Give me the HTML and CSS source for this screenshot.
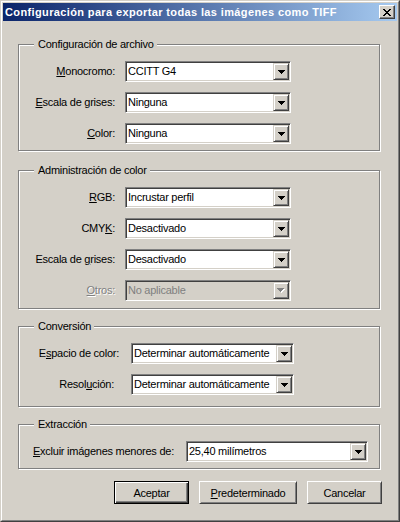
FILE: index.html
```html
<!DOCTYPE html>
<html lang="es">
<head>
<meta charset="utf-8">
<title>Configuración para exportar todas las imágenes como TIFF</title>
<link rel="stylesheet" href="styles.css">
</head>
<body>
<div class="window">
  <div class="frame">
    <div class="titlebar">
      <span class="title">Configuración para exportar todas las imágenes como TIFF</span>
      <span class="close">
        <svg width="8" height="7" viewBox="0 0 8 7" shape-rendering="crispEdges">
          <rect x="0" y="0" width="2" height="1"/><rect x="6" y="0" width="2" height="1"/>
          <rect x="1" y="1" width="2" height="1"/><rect x="5" y="1" width="2" height="1"/>
          <rect x="2" y="2" width="4" height="1"/>
          <rect x="3" y="3" width="2" height="1"/>
          <rect x="2" y="4" width="4" height="1"/>
          <rect x="1" y="5" width="2" height="1"/><rect x="5" y="5" width="2" height="1"/>
          <rect x="0" y="6" width="2" height="1"/><rect x="6" y="6" width="2" height="1"/>
        </svg>
      </span>
    </div>

    <div class="content">
      <div class="group g1">
        <div class="group-title">Configuración de archivo</div>
        <div class="form">
          <span class="lbl"><u>M</u>onocromo:</span>
          <div class="combo"><span class="val">CCITT G4</span><span class="drop"><svg class="arrow" width="7" height="4" viewBox="0 0 7 4" shape-rendering="crispEdges"><path d="M0 0h7v1h-7zM1 1h5v1h-5zM2 2h3v1h-3zM3 3h1v1h-1z"/></svg></span></div>
          <span class="lbl"><u>E</u>scala de grises:</span>
          <div class="combo"><span class="val">Ninguna</span><span class="drop"><svg class="arrow" width="7" height="4" viewBox="0 0 7 4" shape-rendering="crispEdges"><path d="M0 0h7v1h-7zM1 1h5v1h-5zM2 2h3v1h-3zM3 3h1v1h-1z"/></svg></span></div>
          <span class="lbl"><u>C</u>olor:</span>
          <div class="combo"><span class="val">Ninguna</span><span class="drop"><svg class="arrow" width="7" height="4" viewBox="0 0 7 4" shape-rendering="crispEdges"><path d="M0 0h7v1h-7zM1 1h5v1h-5zM2 2h3v1h-3zM3 3h1v1h-1z"/></svg></span></div>
        </div>
      </div>

      <div class="group g2">
        <div class="group-title">Administración de color</div>
        <div class="form">
          <span class="lbl"><u>R</u>GB:</span>
          <div class="combo"><span class="val">Incrustar perfil</span><span class="drop"><svg class="arrow" width="7" height="4" viewBox="0 0 7 4" shape-rendering="crispEdges"><path d="M0 0h7v1h-7zM1 1h5v1h-5zM2 2h3v1h-3zM3 3h1v1h-1z"/></svg></span></div>
          <span class="lbl">CMY<u>K</u>:</span>
          <div class="combo"><span class="val">Desactivado</span><span class="drop"><svg class="arrow" width="7" height="4" viewBox="0 0 7 4" shape-rendering="crispEdges"><path d="M0 0h7v1h-7zM1 1h5v1h-5zM2 2h3v1h-3zM3 3h1v1h-1z"/></svg></span></div>
          <span class="lbl">Escala de <u>g</u>rises:</span>
          <div class="combo"><span class="val">Desactivado</span><span class="drop"><svg class="arrow" width="7" height="4" viewBox="0 0 7 4" shape-rendering="crispEdges"><path d="M0 0h7v1h-7zM1 1h5v1h-5zM2 2h3v1h-3zM3 3h1v1h-1z"/></svg></span></div>
          <span class="lbl disabled"><u>O</u>tros:</span>
          <div class="combo disabled"><span class="val">No aplicable</span><span class="drop"><svg class="arrow" width="8" height="5" viewBox="0 0 8 5" shape-rendering="crispEdges"><path class="hl" d="M1 1h7v1h-7zM2 2h5v1h-5zM3 3h3v1h-3zM4 4h1v1h-1z"/><path class="sh" d="M0 0h7v1h-7zM1 1h5v1h-5zM2 2h3v1h-3zM3 3h1v1h-1z"/></svg></span></div>
        </div>
      </div>

      <div class="group g3">
        <div class="group-title">Conversión</div>
        <div class="form">
          <span class="lbl">E<u>s</u>pacio de color:</span>
          <div class="combo"><span class="val">Determinar automáticamente</span><span class="drop"><svg class="arrow" width="7" height="4" viewBox="0 0 7 4" shape-rendering="crispEdges"><path d="M0 0h7v1h-7zM1 1h5v1h-5zM2 2h3v1h-3zM3 3h1v1h-1z"/></svg></span></div>
          <span class="lbl res">Resol<u>u</u>ción:</span>
          <div class="combo"><span class="val">Determinar automáticamente</span><span class="drop"><svg class="arrow" width="7" height="4" viewBox="0 0 7 4" shape-rendering="crispEdges"><path d="M0 0h7v1h-7zM1 1h5v1h-5zM2 2h3v1h-3zM3 3h1v1h-1z"/></svg></span></div>
        </div>
      </div>

      <div class="group g4">
        <div class="group-title">Extracción</div>
        <div class="form">
          <span class="lbl"><u>E</u>xcluir imágenes menores de:</span>
          <div class="combo"><span class="val">25,40 milímetros</span><span class="drop"><svg class="arrow" width="7" height="4" viewBox="0 0 7 4" shape-rendering="crispEdges"><path d="M0 0h7v1h-7zM1 1h5v1h-5zM2 2h3v1h-3zM3 3h1v1h-1z"/></svg></span></div>
        </div>
      </div>

      <div class="buttons">
        <button class="btn default">Aceptar</button>
        <button class="btn wide"><u>P</u>redeterminado</button>
        <button class="btn">Cancelar</button>
      </div>
    </div>
  </div>
</div>
</body>
</html>
```
FILE: styles.css
```css
* { box-sizing: border-box; }

html, body {
  margin: 0;
  padding: 0;
  background: #d4d0c8;
}

body {
  font-family: "Liberation Sans", Arial, sans-serif;
  font-size: 11px;
  letter-spacing: -0.25px;
  color: #000;
}

u { text-decoration: underline; text-underline-offset: 1px; }

.window {
  width: 400px;
  height: 522px;
  border: 1px solid;
  border-color: #d4d0c8 #404040 #404040 #d4d0c8;
  background: #d4d0c8;
}

.frame {
  height: 100%;
  border: 1px solid;
  border-color: #fff #808080 #808080 #fff;
  padding: 1px;
}

.titlebar {
  height: 18px;
  display: flex;
  align-items: center;
  justify-content: space-between;
  padding: 0 2px;
  background: linear-gradient(to right, #0a246a, #a6caf0);
}

.title {
  color: #fff;
  font-weight: bold;
  letter-spacing: 0.37px;
  white-space: nowrap;
  line-height: 18px;
}

.close {
  width: 16px;
  height: 14px;
  display: flex;
  align-items: center;
  justify-content: center;
  background: #d4d0c8;
  border: 1px solid;
  border-color: #fff #404040 #404040 #fff;
  box-shadow: inset -1px -1px 0 #808080;
}
.close svg { fill: #000; display: block; }

.content {
  padding: 23px 17px 0 15px;
}

.group {
  position: relative;
  border: 1px solid #808080;
  box-shadow: inset 1px 1px 0 #fff, 1px 1px 0 #fff;
}

.group-title {
  position: absolute;
  top: -7px;
  left: 15px;
  padding: 0 3px 0 4px;
  line-height: 13px;
  background: #d4d0c8;
  white-space: nowrap;
}

.g2 { margin-top: 19px; }
.g3, .g4 { margin-top: 17px; }

.form {
  display: grid;
  align-items: center;
  row-gap: 10px;
}

.g1 .form {
  grid-template-columns: 96px 166px;
  column-gap: 10px;
  padding: 16px 0 6px;
}

.g2 .form {
  grid-template-columns: 96px 166px;
  column-gap: 10px;
  padding: 16px 0 7px;
}

.g3 .form {
  grid-template-columns: 100px 163px;
  column-gap: 12px;
  padding: 16px 0 11px;
}

.g4 .form {
  grid-template-columns: 141px 182px;
  column-gap: 12px;
  padding: 16px 0 6px 14px;
}

.lbl {
  text-align: right;
  white-space: nowrap;
  line-height: 13px;
}
.lbl.res { padding-right: 5px; }
.g4 .lbl { text-align: left; }

.lbl.disabled {
  color: #808080;
  text-shadow: 1px 1px 0 #fff;
}

.combo {
  height: 21px;
  display: flex;
  align-items: center;
  background: #fff;
  border: 1px solid;
  border-color: #808080 #fff #fff #808080;
  box-shadow: inset 1px 1px 0 #404040, inset -1px -1px 0 #d4d0c8;
  padding: 1px;
}

.combo .val {
  flex: 1;
  padding-left: 1px;
  white-space: nowrap;
  overflow: hidden;
  line-height: 13px;
}

.drop {
  width: 16px;
  height: 17px;
  flex: none;
  display: flex;
  align-items: center;
  justify-content: center;
  background: #d4d0c8;
  border: 1px solid;
  border-color: #d4d0c8 #404040 #404040 #d4d0c8;
  box-shadow: inset 1px 1px 0 #fff, inset -1px -1px 0 #808080;
}

.arrow { display: block; fill: #000; }

.combo.disabled {
  background: #d4d0c8;
  color: #808080;
}
.combo.disabled .arrow .hl { fill: #fff; }
.combo.disabled .arrow .sh { fill: #808080; }

.buttons {
  display: flex;
  justify-content: flex-end;
  gap: 10px;
  margin-top: 12px;
  margin-right: -2px;
}

.btn {
  width: 75px;
  height: 23px;
  padding: 0;
  font: inherit;
  letter-spacing: inherit;
  color: #000;
  background: #d4d0c8;
  border: 1px solid;
  border-color: #fff #404040 #404040 #fff;
  box-shadow: inset 1px 1px 0 #d4d0c8, inset -1px -1px 0 #808080;
}

.btn.wide { width: 98px; }

.btn.default {
  border-color: #000;
  box-shadow: inset 1px 1px 0 #fff, inset -1px -1px 0 #404040, inset -2px -2px 0 #808080;
}
```
